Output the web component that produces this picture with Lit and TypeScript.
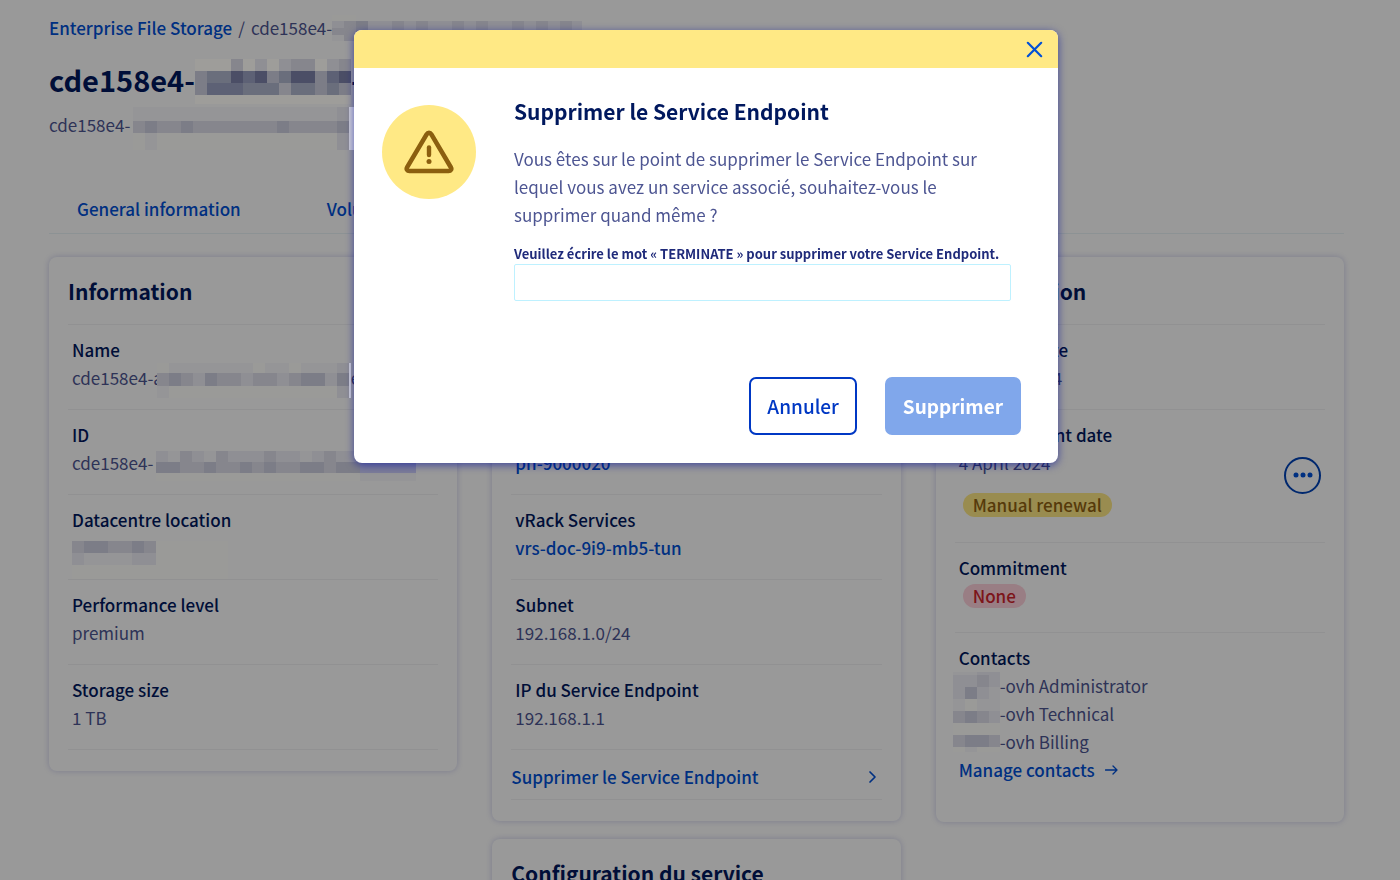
import { LitElement, html, css, svg, nothing } from "lit";
import type { TemplateResult } from "lit";

const tones: Record<string, string> = {
  w: "#cfcfd6",
  l: "#9e9d9a",
  m: "#9a9a98",
  n: "#959597",
  a: "#8f8f94",
  b: "#86868d",
  c: "#7c7d87",
  d: "#6a6e7c",
  e: "#5d6175",
  f: "#4b4e66",
  s: "#7c7d98",
};

/** Block mosaic that hides private values. One string per row, one tone per cell; a dot leaves a gap. */
class RedactedValue extends LitElement {
  static properties = {
    rows: { attribute: false },
    heights: { attribute: false },
    cell: { type: Number },
    width: { type: Number },
  };
  declare rows: string[];
  declare heights: number[];
  declare cell: number;
  declare width: number;

  constructor() {
    super();
    this.rows = [];
    this.heights = [];
    this.cell = 12;
    this.width = 0;
  }

  static styles = css`
    :host {
      display: block;
      flex: none;
      position: relative;
      z-index: 2;
    }
    svg {
      display: block;
    }
  `;

  render() {
    const total = this.heights.reduce((sum, h) => sum + h, 0);
    let y = 0;
    const cells = this.rows.map((row, r) => {
      const top = y;
      const h = this.heights[r];
      y += h;
      return [...row].map((t, i) =>
        tones[t]
          ? svg`<rect x=${i * this.cell} y=${top} width=${this.cell} height=${h} fill=${tones[t]}></rect>`
          : nothing
      );
    });
    return html`<svg
      width=${this.width}
      height=${total}
      viewBox="0 0 ${this.width} ${total}"
      shape-rendering="crispEdges"
      role="img"
      aria-label="***"
    >
      ${cells}
    </svg>`;
  }
}
customElements.define("redacted-value", RedactedValue);

const mosaic = (width: number, heights: number[], rows: string[]) =>
  html`<redacted-value .width=${width} .heights=${heights} .rows=${rows}></redacted-value>`;

class AppRoot extends LitElement {
  static styles = css`
    :host {
      display: block;
      height: 100vh;
      overflow: hidden;
      background: #fff;
      color: #4d5592;
      font: 400 17px/28px "Noto Sans CJK SC", "Noto Sans", sans-serif;
    }
    * {
      box-sizing: border-box;
    }
    h1,
    h2,
    p,
    dl,
    dd,
    ul {
      margin: 0;
      padding: 0;
    }
    button {
      font: inherit;
      cursor: pointer;
    }
    a {
      color: #0050d7;
      font-weight: 500;
      text-decoration: none;
    }
    .page {
      padding: 14px 56px 0 49px;
    }
    .line {
      display: flex;
      align-items: center;
      height: 28px;
      white-space: nowrap;
    }
    .crumbs {
      gap: 6px;
    }
    .title {
      height: 40px;
      margin: 17px 0 12px;
      font-size: 29px;
      font-weight: 700;
      line-height: 40px;
      color: #00185e;
    }
    .tabs {
      display: flex;
      gap: 30px;
      margin: 56px 0 23px;
      padding-bottom: 10px;
      border-bottom: 1px solid #eaf3f7;
    }
    .tabs a {
      padding: 0 28px;
    }
    .columns {
      display: grid;
      grid-template-columns: repeat(3, minmax(0, 1fr));
      gap: 35px;
      align-items: start;
    }
    .column {
      display: grid;
      gap: 18px;
    }
    .card {
      padding: 20px 19px 21px;
      border-radius: 8px;
      background: #fff;
      box-shadow: 0 0 6px rgba(0, 14, 156, 0.2);
    }
    .card h2 {
      padding-bottom: 19px;
      border-bottom: 1px solid #f2f2f4;
      font-size: 21px;
      font-weight: 700;
      line-height: 28px;
      color: #00185e;
    }
    .row {
      padding: 11px 4px 17px;
      border-bottom: 1px solid #f2f2f4;
    }
    .row.last {
      border-bottom: 0;
    }
    dt {
      font-weight: 500;
      color: #00185e;
    }
    .row.split {
      display: flex;
      align-items: center;
      justify-content: space-between;
      padding-bottom: 13px;
    }
    .badge {
      display: block;
      width: max-content;
      margin: 2px 4px;
      padding: 0 10px;
      border-radius: 12px;
      font-weight: 500;
      line-height: 24px;
    }
    .warning {
      margin-top: 16px;
      margin-bottom: 12px;
      background: #ffe985;
      color: #8f6212;
    }
    .critical {
      margin-bottom: 7px;
      background: #ffd2dd;
      color: #d0242c;
    }
    .more {
      display: grid;
      place-items: center;
      width: 37px;
      height: 37px;
      padding: 0;
      border: 2px solid #0043b8;
      border-radius: 50%;
      background: none;
      color: #0050d7;
    }
    .people {
      display: flex;
      margin-left: -6px;
    }
    .people ul {
      list-style: none;
    }
    .manage {
      display: flex;
      align-items: center;
      gap: 10px;
    }
    .action {
      display: flex;
      align-items: center;
      justify-content: space-between;
      height: 50px;
      padding-right: 4px;
      padding-top: 4px;
      border-bottom: 1px solid #f2f2f4;
    }
    .masked {
      margin-left: 3px;
    }
    .masked-tight {
      margin-left: -6px;
    }
    .scrim {
      position: fixed;
      inset: 0;
      z-index: 1;
      background: rgba(0, 0, 0, 0.4);
    }
    .stage {
      position: fixed;
      inset: 0;
      z-index: 3;
      display: flex;
      justify-content: center;
      align-items: flex-start;
      padding: 30px 0 0 12px;
    }
    .modal {
      width: 704px;
      max-width: 100%;
      overflow: hidden;
      border-radius: 8px;
      background: #fff;
      box-shadow: 0 2px 8px rgba(0, 14, 156, 0.6);
    }
    .bar {
      display: flex;
      align-items: center;
      justify-content: flex-end;
      height: 38px;
      padding-right: 11px;
      background: #ffe985;
    }
    .close {
      display: grid;
      place-items: center;
      width: 25px;
      height: 25px;
      padding: 0;
      border: 0;
      background: none;
      color: #0050d7;
    }
    .content {
      display: flex;
      gap: 38px;
      padding: 29px 47px 0 28px;
    }
    .sign {
      display: grid;
      flex: none;
      place-items: center;
      width: 94px;
      height: 94px;
      margin-top: 8px;
      border-radius: 50%;
      background: #ffe985;
    }
    .form {
      flex: 1;
      min-width: 0;
    }
    .form h2 {
      font-size: 21px;
      font-weight: 700;
      line-height: 28px;
      color: #00185e;
    }
    .form p {
      margin: 20px 0 15px;
    }
    .form label {
      display: block;
      font-size: 13px;
      font-weight: 700;
      line-height: 20px;
      white-space: nowrap;
      color: #1f2a7a;
    }
    .form input {
      display: block;
      width: 100%;
      height: 37px;
      padding: 0 8px;
      border: 1px solid #bef1ff;
      border-radius: 2px;
      font: inherit;
      color: #00185e;
    }
    .actions {
      display: flex;
      justify-content: flex-end;
      gap: 28px;
      padding: 76px 37px 28px;
    }
    .btn {
      height: 58px;
      padding: 0 16px;
      border: 2px solid #0038c4;
      border-radius: 7px;
      background: #fff;
      color: #0038c4;
      font-size: 19px;
      font-weight: 500;
    }
    .btn.primary {
      border-color: #80a7eb;
      background: #80a7eb;
      color: #fff;
      font-weight: 700;
    }
  `;

  private row(label: string, value: TemplateResult | string) {
    return html`<div class="row">
      <dt>${label}</dt>
      <dd class="line">${value}</dd>
    </div>`;
  }

  private information() {
    return html`<section class="card">
      <h2>Information</h2>
      <dl>
        ${this.row(
          "Name",
          html`cde158e4-a<span class="masked-tight"
              >${mosaic(194, [5, 10, 13, 12], [
                "",
                "mnnnnnnnmnnmnnnaw",
                "bcbacbbabbabccacw",
                "nmmmmmmmmmmmmmmaw",
              ])}</span
            >e`
        )}
        ${this.row(
          "ID",
          html`cde158e4-<span class="masked"
              >${mosaic(260, [6, 11, 11, 8], [
                "",
                "anbanbaaabaanabaa",
                "ccbbcbbcbcbbccbccssssss",
                "mmmmmmmmmmmmmmmmmnnnnn",
              ])}</span
            >`
        )}
        ${this.row(
          "Datacentre location",
          mosaic(156, [24, 12, 12, 14], ["", "bccbbcbmmmmmm", "annnnaammmmmm", "mmmmmmmmmmmmm"])
        )}
        ${this.row("Performance level", "premium")} ${this.row("Storage size", "1 TB")}
      </dl>
    </section>`;
  }

  private network() {
    return html`<section class="card">
      <h2>Network</h2>
      <dl>
        ${this.row("IP mode", "Private")}
        ${this.row("Private network", html`<a href="#">pn-9000020</a>`)}
        ${this.row("vRack Services", html`<a href="#">vrs-doc-9i9-mb5-tun</a>`)}
        ${this.row("Subnet", "192.168.1.0/24")}
        ${this.row("IP du Service Endpoint", "192.168.1.1")}
      </dl>
      <a class="action" href="#"
        >Supprimer le Service Endpoint
        <svg width="10" height="14" viewBox="0 0 10 14" fill="none" stroke="currentColor" stroke-width="1.7">
          <path d="M2 2l5 5-5 5" stroke-linecap="round" stroke-linejoin="round" />
        </svg>
      </a>
    </section>`;
  }

  private subscription() {
    return html`<section class="card">
      <h2>Subscription</h2>
      <dl>
        ${this.row("Creation date", "4 March 2024")}
        <div class="row split">
          <div>
            <dt>Next payment date</dt>
            <dd class="line">4 April 2024</dd>
            <dd class="badge warning">Manual renewal</dd>
          </div>
          <dd>
            <button class="more" aria-label="More actions">
              <svg width="20" height="6" viewBox="0 0 20 6" fill="currentColor">
                <circle cx="3" cy="3" r="2.5" />
                <circle cx="10" cy="3" r="2.5" />
                <circle cx="17" cy="3" r="2.5" />
              </svg>
            </button>
          </dd>
        </div>
        <div class="row">
          <dt>Commitment</dt>
          <dd class="badge critical">None</dd>
        </div>
        <div class="row last">
          <dt>Contacts</dt>
          <dd class="people">
            ${mosaic(47, [3, 12, 12, 12, 12, 12, 12, 5], [
              "nnaa",
              "aaba",
              "acan",
              "nmnn",
              "bcba",
              "mmmm",
              "bccb",
              "mnmm",
            ])}
            <ul>
              <li>-ovh Administrator</li>
              <li>-ovh Technical</li>
              <li>-ovh Billing</li>
            </ul>
          </dd>
          <dd>
            <a class="manage" href="#"
              >Manage contacts
              <svg width="13" height="12" viewBox="0 0 13 12" fill="none" stroke="currentColor" stroke-width="1.3">
                <path d="M.5 6h11.5M8 2l4 4-4 4" stroke-linecap="round" stroke-linejoin="round" />
              </svg>
            </a>
          </dd>
        </div>
      </dl>
    </section>`;
  }

  private dialog() {
    return html`<div class="stage">
      <div class="modal" role="dialog" aria-modal="true" aria-labelledby="dialog-title">
        <div class="bar">
          <button class="close" aria-label="Fermer">
            <svg width="17" height="17" viewBox="0 0 17 17" fill="none" stroke="currentColor" stroke-width="2.2">
              <path d="M1.8 1.8l13.4 13.4M15.2 1.8L1.8 15.2" stroke-linecap="round" />
            </svg>
          </button>
        </div>
        <div class="content">
          <div class="sign">
            <svg width="50" height="44" viewBox="0 0 50 44" fill="none" stroke="#8b5f0f">
              <path
                d="M22.6 4.4L3.2 37.2c-1.2 2 0 3.8 2.2 3.8h39.2c2.2 0 3.4-1.8 2.2-3.8L27.4 4.4c-1.2-2-3.6-2-4.8 0z"
                stroke-width="4.6"
                stroke-linejoin="round"
              />
              <path d="M25 17.5v7.5" stroke-width="4.4" stroke-linecap="round" />
              <circle cx="25" cy="31.5" r="2.5" fill="#8b5f0f" stroke="none" />
            </svg>
          </div>
          <div class="form">
            <h2 id="dialog-title">Supprimer le Service Endpoint</h2>
            <p>
              Vous êtes sur le point de supprimer le Service Endpoint sur lequel vous avez un service
              associé, souhaitez-vous le supprimer quand même ?
            </p>
            <label for="confirm"
              >Veuillez écrire le mot « TERMINATE » pour supprimer votre Service Endpoint.</label
            >
            <input id="confirm" type="text" autocomplete="off" />
          </div>
        </div>
        <div class="actions">
          <button class="btn">Annuler</button>
          <button class="btn primary" disabled>Supprimer</button>
        </div>
      </div>
    </div>`;
  }

  render() {
    return html`
      <main class="page">
        <nav class="line crumbs">
          <a href="#">Enterprise File Storage</a>
          <span>/</span>
          <span class="line"
            >cde158e4-${mosaic(250, [6, 7, 7, 6], [
              "mm",
              "abcaababaababaabababa",
              "bbcaababaababaabababa",
              "nb",
            ])}</span
          >
        </nav>
        <h1 class="line title">
          cde158e4-${mosaic(156, [5, 12, 12, 12, 9], [
            "",
            "lllblalabblab",
            "cddfefcdffcef",
            "ceeedddbddcdc",
            "lllllllllllll",
          ])}-
        </h1>
        <p class="line">
          cde158e4-<span class="masked"
            >${mosaic(225, [7, 14, 12, 17], [
              "",
              "nnnnnnnnnnnnnnnnnaw",
              "bcbbcbbbbbbbcbbbbcw",
              "mnmmmmmmmmmmmmmmmaw",
            ])}</span
          >
        </p>
        <nav class="tabs">
          <a href="#">General information</a>
          <a href="#">Volumes</a>
        </nav>
        <div class="columns">
          <div class="column">${this.information()}</div>
          <div class="column">
            ${this.network()}
            <section class="card"><h2>Configuration du service</h2></section>
          </div>
          <div class="column">${this.subscription()}</div>
        </div>
      </main>
      <div class="scrim"></div>
      ${this.dialog()}
    `;
  }
}
customElements.define("app-root", AppRoot);
